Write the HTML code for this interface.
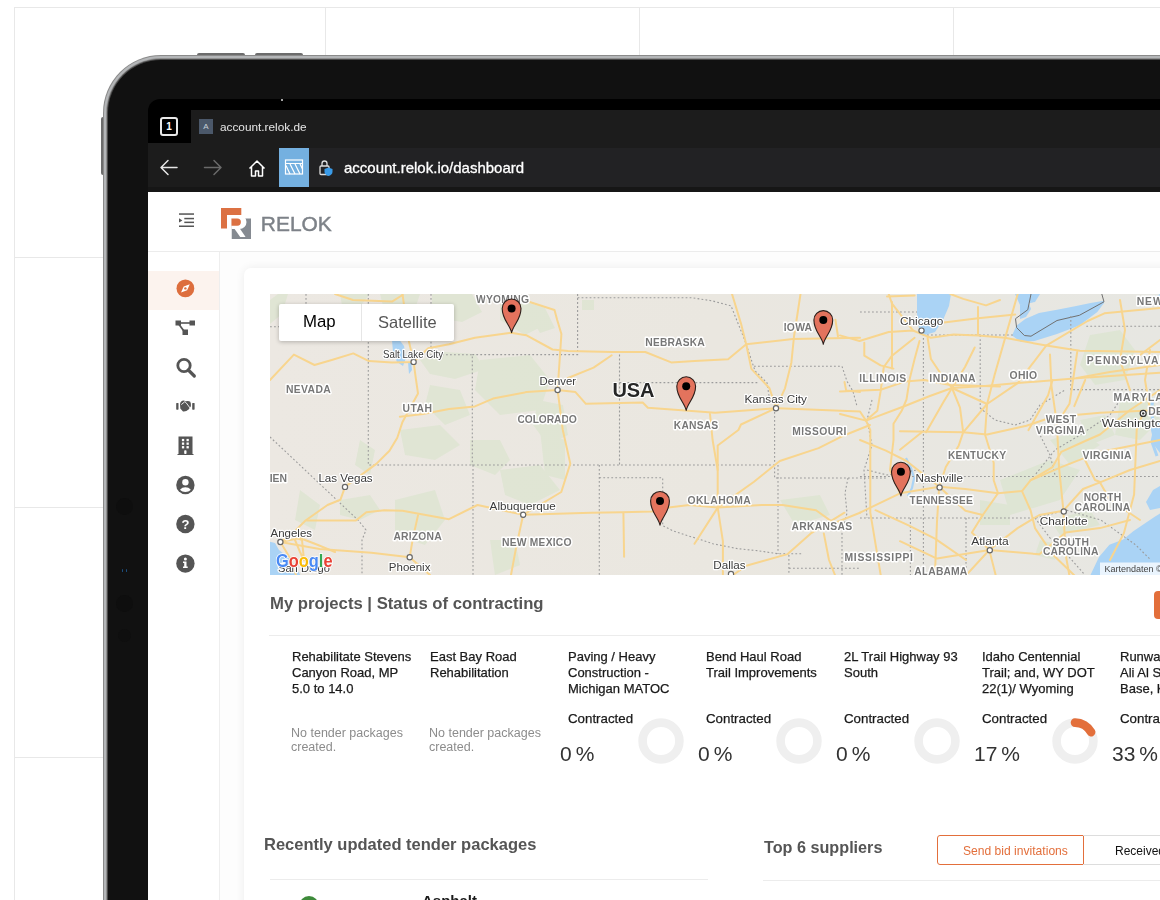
<!DOCTYPE html>
<html><head><meta charset="utf-8">
<style>
*{margin:0;padding:0;box-sizing:border-box}
html,body{width:1160px;height:900px;overflow:hidden;background:#fff;font-family:"Liberation Sans",sans-serif}
div.tx,div.pt,div.nt,div.ct,div.pc,svg{will-change:transform}
div,svg{position:absolute}
.gv{top:7px;width:1px;height:893px;background:#e8e8e8}
.gh{left:14px;height:1px;width:1146px;background:#e8e8e8}
.tx{white-space:nowrap}
.pt{font-size:13px;line-height:16px;color:#1a1a1a;width:130px;-webkit-text-stroke:0.25px #1a1a1a}
.nt{font-size:12.5px;line-height:14px;color:#8c8c8c;width:130px}
.ct{font-size:13.3px;line-height:16px;color:#1a1a1a;-webkit-text-stroke:0.25px #1a1a1a}
.pc{font-size:21px;line-height:24px;color:#333}
</style></head><body>
<!-- grid -->
<div class="gh" style="top:7px"></div>
<div class="gh" style="top:257px"></div>
<div class="gh" style="top:507px"></div>
<div class="gh" style="top:757px"></div>
<div class="gv" style="left:14px"></div>
<div class="gv" style="left:325px"></div>
<div class="gv" style="left:639px"></div>
<div class="gv" style="left:953px"></div>

<!-- frame buttons -->
<div style="left:197px;top:53px;width:48px;height:5px;border-radius:2px;background:#6c6c6c"></div>
<div style="left:255px;top:53px;width:48px;height:5px;border-radius:2px;background:#6c6c6c"></div>
<div style="left:101px;top:117px;width:5px;height:58px;border-radius:2px;background:#6c6c6c"></div>

<div style="left:103px;top:55px;width:1200px;height:1000px;border-radius:58px 0 0 0;background:#8a8a8a"></div>
<div style="left:104px;top:56px;width:1200px;height:1000px;border-radius:57px 0 0 0;background:#b4b6b8"></div>
<div style="left:105.5px;top:57.5px;width:1200px;height:1000px;border-radius:55.5px 0 0 0;background:#909090"></div>
<div style="left:107px;top:59px;width:1200px;height:1000px;border-radius:54px 0 0 0;background:#4a4a4a"></div>
<div style="left:108px;top:60px;width:1200px;height:1000px;border-radius:53px 0 0 0;background:#111"></div>

<div style="left:116px;top:498px;width:17px;height:17px;border-radius:50%;background:#0e0e0e"></div>
<div style="left:121.5px;top:569px;width:1.5px;height:2.5px;border-radius:1px;background:#1d4f80"></div>
<div style="left:125.5px;top:569px;width:1.5px;height:2.5px;border-radius:1px;background:#1d4f80"></div>
<div style="left:116px;top:595px;width:17px;height:17px;border-radius:50%;background:#0e0e0e"></div>
<div style="left:118px;top:629px;width:13px;height:13px;border-radius:50%;background:#0f0f0f"></div>
<!-- screen -->
<div style="left:148px;top:99px;width:1100px;height:900px;border-radius:12px 0 0 0;background:#000"></div>
<div style="left:281px;top:99px;width:2px;height:2px;background:#ddd;border-radius:1px"></div>
<!-- tab bar -->
<div style="left:191px;top:110px;width:1000px;height:38px;background:#1c1c1c"></div>
<div style="left:148px;top:143px;width:43px;height:5px;background:#1c1c1c"></div>
<div style="left:160px;top:117px;width:18px;height:19px;border:2px solid #e8e8e8;border-radius:3px;color:#fff;font-size:10px;font-weight:bold;line-height:15px;text-align:center">1</div>
<div style="left:199px;top:119px;width:14px;height:15px;background:#4b586a;color:#c8d0da;font-size:8px;line-height:15px;text-align:center">A</div>
<div class="tx" style="left:220px;top:119px;font-size:11.8px;line-height:16px;color:#e6e6e6">account.relok.de</div>
<!-- address bar -->
<div style="left:148px;top:148px;width:1100px;height:39px;background:#1c1c1c"></div>
<div style="left:308px;top:148px;width:1000px;height:39px;background:#222224"></div>
<div style="left:279px;top:148px;width:30px;height:39px;background:#74b0e0"></div>
<svg style="left:148px;top:148px" width="200" height="40" viewBox="148 148 200 40">
  <g fill="none" stroke="#e6e6e6" stroke-width="1.5" stroke-linecap="round" stroke-linejoin="round">
    <path d="M177 167.5H161M168 160.5l-7 7 7 7"/>
  </g>
  <g fill="none" stroke="#6a6a6a" stroke-width="1.5" stroke-linecap="round" stroke-linejoin="round">
    <path d="M204.5 167.5H221M214 160.5l7 7-7 7"/>
  </g>
  <g fill="none" stroke="#fff" stroke-width="1.5" stroke-linejoin="round">
    <path d="M249.5 168.5L257 161l7.5 7.5M251.5 166.5V176h4v-5h3v5h4v-9.5"/>
  </g>
  <g fill="none" stroke="#fff" stroke-width="1.2">
    <rect x="285.5" y="160" width="17" height="14"/>
    <path d="M285.5 163.5h17M286 165.5l4 8.5M290 164l5 10M295 164l5 10M300 164l2.5 5"/>
  </g>
  <g fill="none" stroke="#ddd" stroke-width="1.3">
    <rect x="320" y="166" width="9" height="8.5" rx="1"/>
    <path d="M322 166v-2.5a2.5 2.5 0 0 1 5 0V166"/>
  </g>
  <path d="M328.5 167.5l4 1.5v3c0 2-2 3.5-4 4-2-.5-4-2-4-4v-3z" fill="#3a9be8"/>
</svg>
<div class="tx" style="left:344px;top:157px;font-size:15px;line-height:22px;color:#fff;-webkit-text-stroke:0.3px #fff">account.relok.io/dashboard</div>
<div style="left:148px;top:187px;width:1100px;height:5px;background:#161616"></div>

<!-- app -->
<div id="app" style="left:148px;top:192px;width:1100px;height:720px;background:#fff"></div>
<div style="left:148px;top:251px;width:1100px;height:1px;background:#ececec"></div>
<div style="left:219px;top:252px;width:1px;height:700px;background:#eeeeee"></div>
<div style="left:148px;top:271px;width:71px;height:39px;background:#fcf3ee"></div>
<div style="left:220px;top:252px;width:1000px;height:700px;background:#fdfdfd"></div>

<!-- header icon + logo -->
<svg style="left:170px;top:200px" width="180" height="50" viewBox="170 200 180 50">
  <g fill="#555">
    <rect x="179" y="213.3" width="15" height="1.5"/>
    <rect x="184.3" y="217.8" width="9.7" height="1.5"/>
    <rect x="184.3" y="221.6" width="9.7" height="1.5"/>
    <rect x="179" y="225.5" width="15" height="1.5"/>
    <path d="M179 218.3l3.4 2.1-3.4 2.1z"/>
  </g>
  <g>
    <rect x="221" y="208" width="20.3" height="7" fill="#dc7143"/>
    <rect x="221" y="208" width="6" height="20.5" fill="#dc7143"/>
    <rect x="231.5" y="218.5" width="19.5" height="20.5" fill="#858a91"/>
    <path d="M231.5 215H239.5A7 7 0 0 1 239.5 229H231.5Z" fill="#fff"/>
    <path d="M227 215h4.5v24h-4.5z" fill="#fff"/>
    <path d="M231.5 218.5H237.3A3.6 3.6 0 0 1 237.3 225.7H231.5Z" fill="#dc7143"/>
    <path d="M234.3 228.5h5.5l5.8 8.5h-5.4z" fill="#fff"/>
  </g>
  <text x="260.8" y="231" font-family="Liberation Sans" font-size="21" fill="#7d8288" stroke="#7d8288" stroke-width="0.45" textLength="71" lengthAdjust="spacingAndGlyphs">RELOK</text>
</svg>

<!-- sidebar icons -->
<svg style="left:160px;top:270px" width="50" height="310" viewBox="160 270 50 310">
  <circle cx="185.4" cy="288.4" r="8.9" fill="#dd6e3d"/>
  <path d="M181 292.6L183.7 286.6 189.8 284.2 187.1 290.2z" fill="#fff"/>
  <circle cx="185.4" cy="288.4" r="1.2" fill="#dd6e3d"/>
  <g fill="#555">
    <rect x="175.5" y="320.5" width="5.5" height="5"/>
    <rect x="189.5" y="320.5" width="5.5" height="5"/>
    <rect x="182.5" y="329.5" width="5.5" height="5.5"/>
    <rect x="180" y="322.2" width="10" height="1.6"/>
    <path d="M178 324.5l1.4-.9 5.2 7-1.4.9z"/>
  </g>
  <circle cx="184" cy="365.5" r="6.2" fill="none" stroke="#555" stroke-width="2.8"/>
  <path d="M188.3 370l6 6" stroke="#555" stroke-width="3.2" stroke-linecap="round"/>
  <g fill="#555">
    <rect x="176.2" y="402.9" width="2.3" height="6.8" rx="0.6"/>
    <rect x="192.2" y="402.9" width="2.4" height="6.8" rx="0.6"/>
    <path d="M180 404Q180.5 400.6 183.8 400.5L185.8 401.3Q188.5 400.3 190.3 401.8Q191.2 403.5 190.9 406.2L188.6 409.6Q186 411.8 183 411.4L180.3 408.6Z"/>
  </g>
  <path d="M181.3 404.6L184.8 401.7 186 402.6 190.3 408.3" stroke="#fff" stroke-width="0.9" fill="none"/>
  <g fill="#555">
    <path d="M178.5 436.5h14v17.5h1v1h-16v-1h1z"/>
  </g>
  <g fill="#fff">
    <rect x="181.9" y="438.9" width="2.3" height="2.3"/><rect x="186.5" y="438.9" width="2.3" height="2.3"/>
    <rect x="181.9" y="442.5" width="2.3" height="2.3"/><rect x="186.5" y="442.5" width="2.3" height="2.3"/>
    <rect x="181.9" y="446.1" width="2.3" height="2.3"/><rect x="186.5" y="446.1" width="2.3" height="2.3"/>
    <rect x="184.2" y="450.3" width="2.3" height="3.8" rx="0.8"/>
  </g>
  <circle cx="185.4" cy="485" r="9.2" fill="#555"/>
  <circle cx="185.4" cy="482.3" r="3.2" fill="#fff"/>
  <path d="M180 489.8c1.4-1.9 3.2-2.6 5.4-2.6s4 .7 5.4 2.6c-1.5 1.4-3.3 2.2-5.4 2.2s-3.9-.8-5.4-2.2z" fill="#fff"/>
  <circle cx="185.4" cy="524" r="9.2" fill="#555"/>
  <text x="185.4" y="529" text-anchor="middle" font-family="Liberation Sans" font-weight="bold" font-size="13" fill="#fff">?</text>
  <circle cx="185.4" cy="563.6" r="9.2" fill="#555"/>
  <circle cx="185.4" cy="559" r="1.5" fill="#fff"/>
  <path d="M183 561.5h3.5v5h1.2v1.5h-4.7v-1.5h1.2v-3.5h-1.2z" fill="#fff"/>
</svg>

<!-- card -->
<div style="left:244px;top:268px;width:1000px;height:700px;border-radius:7px;background:#fff;box-shadow:0 0 10px rgba(0,0,0,0.07)"></div>

<!-- MAP -->
<div id="map" style="left:270px;top:294px;width:890px;height:281px;background:#ebe7e1;overflow:hidden">
<svg style="left:0;top:0" width="890" height="281" viewBox="270 294 890 281">
<defs>
<linearGradient id="bg" x1="0" x2="1" y1="0" y2="0"><stop offset="0" stop-color="#ece8e2"/><stop offset="0.5" stop-color="#eae7e0"/><stop offset="1" stop-color="#e7e7e2"/></linearGradient>
</defs>
<rect x="270" y="294" width="890" height="281" fill="url(#bg)"/>
<!-- green patches -->
<g fill="#d9e4cc" opacity="0.6">
<path d="M270 300l8 -6h10l-6 20-12 10z"/>
<path d="M340 294h30l-8 10-20 2z"/>
<path d="M380 294h40l-5 15-30 5z"/>
<path d="M432 294h40l10 18-20 10-30-5z"/>
<path d="M500 300l30 5 15 20-20 10-25-15z"/>
<path d="M420 360l25-8 30 2 10 15-30 10-25-5z"/>
<path d="M430 385l30 5 10 25-25 10-20-20z"/>
<path d="M480 360l50 -5 20 25-10 30-40 5-25-25z"/>
<path d="M520 300l25 8 10 20-15 5z"/>
<path d="M538 400l25 5 5 30-20 10-15-20z"/>
<path d="M400 430l40-5 20 20-25 15-30-5z"/>
<path d="M470 440l30 0 10 20-15 15-25-10z"/>
<path d="M360 440l15 10-5 25-15-10z"/>
<path d="M340 500l30-5 10 15-20 10-20-5z"/>
<path d="M395 500l40-10 10 30-20 25-30-10z"/>
<path d="M500 470l40-5 20 25-30 15-25-10z"/>
<path d="M540 430l25 10v40l-20-5z"/>
<path d="M490 540l25 0 5 25-25 10z"/>
<path d="M300 490l20 15-5 25-20-10z"/>
<path d="M582 300l12 0 0 10-12 0z"/>
<path d="M1090 335l30 -5 15 20-10 30-30 5-15-20z"/>
<path d="M1120 400l30 -10 10 30-20 20-25-5z"/>
<path d="M1000 480l50-20 30 10-20 30-50 15z"/>
<path d="M1050 440l30-10 20 15-30 20z"/>
<path d="M780 500l40-5 10 20-35 10z"/>
<path d="M1080 420l25 -5 10 20-25 10z"/>
<path d="M980 500l30 5 0 20-30 0z"/>
<path d="M1040 540l20 5-5 15-20-5z"/>
<path d="M1050 520l40 -10 10 15-40 10z"/>
</g>
<!-- water -->
<g fill="#aad3f5">
<path d="M392 340l6-2 6 8 2 12-3 8-6-4-4-10z"/>
<path d="M408 362l3 0 1 8-3 4z"/>
<path d="M917 294h34l-2 12-6 14-8 12-10 3-6-6-2-15z"/>
<path d="M1015 294h25l-5 8-15 3z"/>
<path d="M1012 335.5L1016.6 325.4 1025.6 318.7 1039 313 1057 309.7 1075 306.3 1090.6 303 1104 300.7 1104 303 1097.3 312 1079.4 325.4 1057 334 1034.5 341 1021 342Z"/><path d="M1020 305l8-4 3 8-5 8-6 2z"/>
<path d="M270 541.7L275 543 279 550 285 555 291 560 300.4 575H270Z"/>
<path d="M1090 576L1099 557 1109.4 544.8 1123.2 539.6 1133.6 531 1144 524 1154.4 517 1160 513.6V576Z"/><path d="M1146 502L1153 490 1160 486V508L1150 510Z"/>
<path d="M1150 425l6-5 4 3v30l-6-8z"/>
<path d="M1150 300l10-6v10z"/>
</g>
<path d="M906 458L911 468 914 478 912 488 908 496" fill="none" stroke="#aad3f5" stroke-width="2.2"/>
<path d="M1153 398L1151 412 1155 428 1152 442 1157 456" fill="none" stroke="#aad3f5" stroke-width="3"/>
<!-- intl border -->
<path d="M1031 294L1027.8 309.7 1015.5 318.7 1016.6 327.6 1024.4 335.5 1031 336.2 1057 320.5 1079.4 315.3 1104 301.8 1101.8 294" fill="none" stroke="#707070" stroke-width="1"/>
<!-- state borders -->
<g fill="none" stroke="#9c9c9c" stroke-width="1.1" stroke-dasharray="1.8 2.2">
<path d="M306 294v32"/>
<path d="M270 326.7h161v28h41.3v110.3"/>
<path d="M368.3 294v171h104.7"/>
<path d="M431 294v32.7"/>
<path d="M472.3 354.6h105.3V294"/>
<path d="M577.6 297.8h114.4l20 3 19 5 6 15 8 20 10 30 12 12 3 20"/>
<path d="M619.5 354.6v110.4"/>
<path d="M619.5 382.6h139.5"/>
<path d="M473 465v110"/>
<path d="M473 465h301.6v13h113"/>
<path d="M599.3 465v110"/>
<path d="M599.3 477.8h63.4v47.9l10 5 15 5 10 3 15 5 25 5 20 2 20 3 25 0"/>
<path d="M778 465v89"/>
<path d="M788.9 555v20"/>
<path d="M789 568.3h71"/>
<path d="M754 366.3h88l5 15 6 10 4 15"/>
<path d="M270 437l88 83 8 10-4 10v35"/>
<path d="M774.6 400v65"/>
<path d="M848 478l-3 15 2 20-5 20v42"/>
<path d="M860 312h57"/>
<path d="M923.4 334v241"/>
<path d="M923 335h92"/>
<path d="M980.2 335.3v72.4"/>
<path d="M1070.8 316v73.6h89.2"/>
<path d="M1086.3 326.2h73.7"/>
<path d="M860 476.5h300"/>
<path d="M860 518h175.8"/>
<path d="M966 518v57"/>
<path d="M910.4 518v57"/>
<path d="M872 400l-5 20 5 25-8 25 3 48"/>
<path d="M980 408l15 12 20 5 15-5 10-15 25-15"/>
<path d="M1035 425l15 30 5 20"/>
<path d="M1120 400l-10 15-30 20-25 15-20 25"/>
<path d="M1035.8 518l30-8 35 10 35 25 15 15"/>
<path d="M1035 518l15 20 20 20 15 17"/>
<path d="M867 470l20 5 30 -5"/>
</g>

<g fill="none" stroke="#f8d58e" stroke-width="2" stroke-linejoin="round" stroke-linecap="round">
<!-- west -->
<path d="M270 380L293.9 354.6 314.5 365 332.6 359.8 353.3 353.4 368.9 361.1 392 362.4 413.6 361.9 428.3 348.2 449 344.3 474.9 337.8 511 332.7 526.6 335.3 552.5 349.5 568 351 611.7 352 645.3 352 671.2 362.4 694.5 361.1 728.1 359.3 746.2 344.3 792.7 339.1 860 337.8"/>
<path d="M402.5 294L409 341.7 413.6 361.9 415.4 375.3 418 393.4 402.5 421.9 397.3 437.8 389.5 450.7 376.6 463.6 345 486.9 340.4 499.8 327.5 505 305.5 520.5 293.9 532.1 280.4 542"/>
<path d="M399.9 416.7L423.2 414.1 449 409 474.9 406.4 493 398.6 526.6 392.1 557.6 390 575.5 392.1 585.9 403.8 642.7 402.5 647.9 407.7 715.2 412.8 776 408.2 860 411.5 866 420.6"/>
<path d="M560.2 352L557.6 390 562.8 430 570.3 463.6 561.3 492 523.2 514.8 516.3 546.4 511 575"/>
<path d="M306.8 520.5L355.9 520.5 366.3 512.2 384.4 510.2 402.5 510.7 449 519.2 477.5 505 523.2 514.8 591 512.7 622.1 512.2 651.8 511.5 668.6 507.6 689.3 505 717.7 507.6 761.7 505 782.4 505 816 510.2 834 523.1 860 512.7"/>
<path d="M280.4 542L319.7 549 371.4 552.8 409.7 557.2 412.8 538.6 418 515.3"/>
<path d="M409.7 557.2L430 575"/>
<path d="M280.4 542L290 558 296 575"/>
<path d="M295 540L300 552 304 560 302 540 297 538"/>
<path d="M280.4 542L300 538 318 545 335 552"/>
<path d="M529.7 302L554.5 310 557.2 320 561.4 334 560.2 352"/>
<path d="M568 378L593.6 367.6 611.7 355.2"/>
<path d="M335 294L353 300 392 301.6 402.5 295"/>

<!-- central -->
<path d="M800.5 294L794 336.5 791.4 362.4 785 388.3 776 408.2 741 424.5 738.4 430 717.7 445.5 717.7 507.6 722.9 541.2 722.9 575"/>
<path d="M776 408.2L769.5 388.3 751.4 368.9 746.2 344.3 741 323.6 732 294"/>
<path d="M710 414L712.6 440 717.7 470"/>
<path d="M717.7 507.6L754 481.7 779.8 461 818.6 448.1 844.5 435.2 870 425"/>
<path d="M623.4 512.7L624.1 556.7"/>
<path d="M717.7 507.6L694.5 543.8"/>
<path d="M746.2 565.8L787.6 554.1 810.8 533.4 844.5 512.7"/>
<path d="M823.8 533.4L829 560 835 575"/>
<path d="M835.4 319.7L838 336.5"/>
<path d="M844.5 382L846.2 390.6 860 392"/>
<path d="M733 575L746 566"/>
<!-- east -->
<path d="M840 335.4L859.5 341 888.7 332 913 330.5 921 333.8 930.9 337.8 953.6 334.6 978 335.4 1004.8 337.8 1046.2 345.6 1079.8 350.8 1160 352"/>
<path d="M913 330.5L892 303.7 888.7 294"/>
<path d="M887 296.4L914.6 295.6"/>
<path d="M950.3 294L963.3 298.9 986 305.4 1000 300"/>
<path d="M943.9 322.4L978 318.3 1015.2 314.6"/>
<path d="M978 307L978 334.6"/>
<path d="M919.5 341L914.6 359 909.8 378.4 906.5 399.5 901.7 410.8 893.5 423.8 893.5 440 890 470 900 493.3"/>
<path d="M914.6 337.8L892 355.7 883.8 367 880.6 391.4 877.3 410.8 866 420.6 840 414"/>
<path d="M840 391.4L880.6 389.7 904.9 381.6 924.4 380 950.3 384.9 1000 386.5"/>
<path d="M927.6 337.8L930.9 359 940.6 373.5 952 388 960 407.6 963.2 432.3 958.8 445.4 945.8 467 939.2 486.8 937 521.6 934.9 576"/>
<path d="M866 420.6L904.9 406 929.2 396.2 952 388 985 386 1017.7 383.1 1079.8 377.9 1160 372.8"/>
<path d="M974.7 347.5L965 367 952 388 943.6 401.8 926.1 432.3"/>
<path d="M952 388L987.1 404"/>
<path d="M963.2 432.3L987.1 404 1017.7 383.1 1046.2 345.6"/>
<path d="M864.3 342.7L864.3 355.7 880.6 365.4 893.5 368.6"/>
<path d="M892 302L892 368.6"/>
<path d="M1017.7 294L1004.8 339.1 994.5 375.3 987.1 404 985 434.5 993.7 462.8 993.7 480.2 998 493.3 982.8 515 971.9 532.5 989.3 550 995.9 576"/>
<path d="M900 431.2L963.2 432.3 987.1 434.5 1026.4 425.8 1052.5 417 1100 412.7 1160 410"/>
<path d="M1050 354.6L1051.4 385.7 1056.9 423.6 1059 467.1 1063.4 510.7 1065.6 554.3 1069.5 576"/>
<path d="M1077.2 352L1069.5 403.8 1056.9 423.6"/>
<path d="M1030.7 480.2L1052.5 467.1 1061.2 451.9 1085.2 441 1100 434.5 1130 410 1160 390"/>
<path d="M860 512.7L900 493.3 939.2 486.8 965.4 489 998 493.3 1022 491.1 1030.7 480.2 1061.2 467.1 1100 451.9 1160 440"/>
<path d="M1022 491.1L1030.7 510.7 1035 528.1 1052.5 554.3 1075 576"/>
<path d="M965.4 576L989.3 550 1017.6 528.1 1039.4 515 1063.4 510.7 1083 489 1100 482.4 1130 470 1160 461"/>
<path d="M900 541.2L937 558.6 989.3 550 1039.4 554.3 1065.6 532.5 1100 528.1 1130 520"/>
<path d="M939.2 486.8L965.4 510.7 982.8 515"/>
<path d="M921.8 432.3L900 449.7"/>
<path d="M1028.5 430.1L1048.1 395.3 1052.5 380"/>
<path d="M1074.3 406.1L1085.2 380"/>
<path d="M1143 413L1136.7 430 1134.1 494.6 1123.8 533.4 1110 560"/>
<path d="M1077 378L1110 372 1160 365"/>
<path d="M1046.2 345.6L1087.6 321 1104.4 313.3 1160 308.1"/>
<path d="M1120 300L1125 330 1120 360 1130 390"/>
<path d="M1110 360L1140 355 1160 340"/>
<path d="M1150 350L1145 380 1150 410"/>
<path d="M866 420.6L870.3 430 870.3 512.7 880.7 575"/>
<path d="M875.5 510.2L909.1 525.7 935 538.6 966 560"/>
<path d="M860 440L885.9 450.7 906.5 461 939.2 486.8"/>
<path d="M1100 482.4L1110 500 1140 520"/>
<path d="M1085 460L1095 480 1100 482"/>
</g>
<!-- city dots -->
<g fill="#fff" stroke="#666" stroke-width="1.2">
<circle cx="413.6" cy="361.9" r="2.6"/><circle cx="557.6" cy="390" r="2.6"/><circle cx="345" cy="486.9" r="2.6"/>
<circle cx="280.4" cy="542" r="2.6"/><circle cx="409.7" cy="557.2" r="2.6"/><circle cx="523.2" cy="514.8" r="2.6"/>
<circle cx="776" cy="408.2" r="2.6"/><circle cx="921.5" cy="330.6" r="2.6"/><circle cx="939.6" cy="487.4" r="2.6"/>
<circle cx="1063.8" cy="511.5" r="2.6"/><circle cx="989.8" cy="550.2" r="2.6"/><circle cx="731" cy="574" r="2.6"/>
</g>
<circle cx="1143.2" cy="413.4" r="3" fill="#fff" stroke="#333" stroke-width="1.2"/><circle cx="1143.2" cy="413.4" r="1.2" fill="#333"/>
<g font-family="Liberation Sans" font-weight="bold" font-size="10.4" fill="#777" stroke="#fff" stroke-width="2.8" paint-order="stroke" stroke-linejoin="round">
<text x="476" y="302.9" textLength="53.0" lengthAdjust="spacing">WYOMING</text>
<text x="286" y="393.1" textLength="44.8" lengthAdjust="spacing">NEVADA</text>
<text x="402.5" y="412.3" textLength="29.5" lengthAdjust="spacing">UTAH</text>
<text x="517.5" y="422.8" textLength="59.3" lengthAdjust="spacing">COLORADO</text>
<text x="645.3" y="345.5" textLength="59.5" lengthAdjust="spacing">NEBRASKA</text>
<text x="673.8" y="428.8" textLength="44.5" lengthAdjust="spacing">KANSAS</text>
<text x="783.7" y="331.3" textLength="28.4" lengthAdjust="spacing">IOWA</text>
<text x="792.2" y="434.7" textLength="54.3" lengthAdjust="spacing">MISSOURI</text>
<text x="687.5" y="503.6" textLength="63.3" lengthAdjust="spacing">OKLAHOMA</text>
<text x="791.4" y="530.0" textLength="60.8" lengthAdjust="spacing">ARKANSAS</text>
<text x="393.4" y="540.3" textLength="48.4" lengthAdjust="spacing">ARIZONA</text>
<text x="502" y="545.5" textLength="69.6" lengthAdjust="spacing">NEW MEXICO</text>
<text x="859.2" y="382.0" textLength="47.0" lengthAdjust="spacing">ILLINOIS</text>
<text x="929.3" y="382.3" textLength="46.3" lengthAdjust="spacing">INDIANA</text>
<text x="1009.5" y="379.1" textLength="27.6" lengthAdjust="spacing">OHIO</text>
<text x="1086.8" y="363.6" textLength="93.2" lengthAdjust="spacing">PENNSYLVANIA</text>
<text x="1113.4" y="400.8" textLength="66.6" lengthAdjust="spacing">MARYLAND</text>
<text x="1045.7" y="422.8" textLength="30.3" lengthAdjust="spacing">WEST</text>
<text x="1035.8" y="433.9" textLength="49.2" lengthAdjust="spacing">VIRGINIA</text>
<text x="1136.7" y="305.2" textLength="63.3" lengthAdjust="spacing">NEW YORK</text>
<text x="1148.3" y="414.5" textLength="14.7" lengthAdjust="spacing">DE</text>
<text x="947.9" y="459.4" textLength="58.2" lengthAdjust="spacing">KENTUCKY</text>
<text x="1082.4" y="459.4" textLength="49.1" lengthAdjust="spacing">VIRGINIA</text>
<text x="909.6" y="503.6" textLength="63.4" lengthAdjust="spacing">TENNESSEE</text>
<text x="1083.7" y="501.0" textLength="37.5" lengthAdjust="spacing">NORTH</text>
<text x="1074.6" y="511.3" textLength="55.6" lengthAdjust="spacing">CAROLINA</text>
<text x="1052.7" y="545.5" textLength="36.2" lengthAdjust="spacing">SOUTH</text>
<text x="1043" y="555.1" textLength="55.4" lengthAdjust="spacing">CAROLINA</text>
<text x="844.5" y="561.0" textLength="68.5" lengthAdjust="spacing">MISSISSIPPI</text>
<text x="914.3" y="575.3" textLength="53.0" lengthAdjust="spacing">ALABAMA</text>
<text x="287" y="482" text-anchor="end">RNIEN</text>
</g>
<text x="612.5" y="396.8" textLength="41.9" lengthAdjust="spacing" font-family="Liberation Sans" font-weight="bold" font-size="20" fill="#262626" stroke="#fff" stroke-width="2.2" paint-order="stroke" stroke-linejoin="round">USA</text>
<g font-family="Liberation Sans" font-size="11.5" fill="#3a3a3a" stroke="#fff" stroke-width="2.4" paint-order="stroke" stroke-linejoin="round">
<text x="383" y="357.6" textLength="60.0" lengthAdjust="spacingAndGlyphs">Salt Lake City</text>
<text x="539.5" y="384.7" textLength="36.5" lengthAdjust="spacingAndGlyphs">Denver</text>
<text x="318.4" y="481.5" textLength="54.3" lengthAdjust="spacingAndGlyphs">Las Vegas</text>
<text x="270.6" y="536.9" textLength="41.4" lengthAdjust="spacingAndGlyphs">Angeles</text>
<text x="388.8" y="571.2" textLength="41.6" lengthAdjust="spacingAndGlyphs">Phoenix</text>
<text x="489.6" y="510.0" textLength="66.2" lengthAdjust="spacingAndGlyphs">Albuquerque</text>
<text x="744.4" y="402.8" textLength="62.6" lengthAdjust="spacingAndGlyphs">Kansas City</text>
<text x="713.3" y="569.2" textLength="32.4" lengthAdjust="spacingAndGlyphs">Dallas</text>
<text x="900" y="325.2" textLength="43.3" lengthAdjust="spacingAndGlyphs">Chicago</text>
<text x="1101.8" y="427.4" textLength="67.2" lengthAdjust="spacingAndGlyphs">Washington</text>
<text x="915.6" y="482.0" textLength="47.3" lengthAdjust="spacingAndGlyphs">Nashville</text>
<text x="1039.7" y="525.2" textLength="47.9" lengthAdjust="spacingAndGlyphs">Charlotte</text>
<text x="971.2" y="544.9" textLength="37.5" lengthAdjust="spacingAndGlyphs">Atlanta</text>
<text x="278" y="572.2" textLength="52.0" lengthAdjust="spacingAndGlyphs">San Diego</text>
</g>
<g transform="translate(511.6,332.7)"><path d="M0 0C-1.5-8-9.4-13-9.4-24.3A9.4 9.4 0 1 1 9.4-24.3C9.4-13 1.5-8 0 0Z" fill="#e3735d" stroke="#2b1f1b" stroke-width="1.1" stroke-linejoin="round"/><circle cy="-24.3" r="4" fill="#000"/></g>
<g transform="translate(686.2,410.5)"><path d="M0 0C-1.5-8-9.4-13-9.4-24.3A9.4 9.4 0 1 1 9.4-24.3C9.4-13 1.5-8 0 0Z" fill="#e3735d" stroke="#2b1f1b" stroke-width="1.1" stroke-linejoin="round"/><circle cy="-24.3" r="4" fill="#000"/></g>
<g transform="translate(823.3,344.3)"><path d="M0 0C-1.5-8-9.4-13-9.4-24.3A9.4 9.4 0 1 1 9.4-24.3C9.4-13 1.5-8 0 0Z" fill="#e3735d" stroke="#2b1f1b" stroke-width="1.1" stroke-linejoin="round"/><circle cy="-24.3" r="4" fill="#000"/></g>
<g transform="translate(660,525.2)"><path d="M0 0C-1.5-8-9.4-13-9.4-24.3A9.4 9.4 0 1 1 9.4-24.3C9.4-13 1.5-8 0 0Z" fill="#e3735d" stroke="#2b1f1b" stroke-width="1.1" stroke-linejoin="round"/><circle cy="-24.3" r="4" fill="#000"/></g>
<g transform="translate(900.9,496)"><path d="M0 0C-1.5-8-9.4-13-9.4-24.3A9.4 9.4 0 1 1 9.4-24.3C9.4-13 1.5-8 0 0Z" fill="#e3735d" stroke="#2b1f1b" stroke-width="1.1" stroke-linejoin="round"/><circle cy="-24.3" r="4" fill="#000"/></g>
<g font-family="Liberation Sans" font-weight="bold" font-size="17.5" stroke="#fff" stroke-width="1.5" paint-order="stroke"><text x="276" y="567" textLength="56.5" lengthAdjust="spacingAndGlyphs"><tspan fill="#4a8af4">G</tspan><tspan fill="#e94235">o</tspan><tspan fill="#fabb05">o</tspan><tspan fill="#4a8af4">g</tspan><tspan fill="#34a853">l</tspan><tspan fill="#e94235">e</tspan></text></g>
<rect x="1100" y="562.5" width="60" height="12.5" fill="#fff" opacity="0.75"/>
<text x="1104.4" y="571.5" font-family="Liberation Sans" font-size="9" fill="#444">Kartendaten ©</text>
</svg>
<div style="left:9px;top:9.5px;width:175px;height:37.5px;background:#fff;border-radius:2px;box-shadow:0 1px 4px rgba(0,0,0,0.25)"></div>
<div style="left:90.5px;top:9.5px;width:1px;height:37.5px;background:#e6e6e6"></div>
<div class="tx" style="left:32.5px;top:17px;font-size:16.8px;line-height:22px;color:#000">Map</div>
<div class="tx" style="left:108.3px;top:17px;font-size:16.5px;line-height:22px;color:#565656">Satellite</div>
</div>

<!-- projects -->
<div class="tx" style="left:269.5px;top:593.3px;font-size:16.7px;line-height:22px;font-weight:bold;color:#555">My projects | Status of contracting</div>
<div style="left:1154px;top:591px;width:20px;height:28px;border-radius:4px;background:#e36f3b"></div>
<div style="left:269px;top:635px;width:900px;height:1px;background:#ececec"></div>

<div class="pt tx" style="left:291.9px;top:648.6px">Rehabilitate Stevens<br>Canyon Road, MP<br>5.0 to 14.0</div>
<div class="nt tx" style="left:291.4px;top:725.7px">No tender packages<br>created.</div>
<div class="pt tx" style="left:429.8px;top:648.6px">East Bay Road<br>Rehabilitation</div>
<div class="nt tx" style="left:429.3px;top:725.7px">No tender packages<br>created.</div>
<div class="pt tx" style="left:567.5px;top:648.6px">Paving / Heavy<br>Construction -<br>Michigan MATOC</div>
<div class="ct tx" style="left:567.5px;top:711.2px">Contracted</div>
<div class="pc tx" style="left:559.5px;top:741.9px">0<span style="margin-left:4px">%</span></div>
<svg style="left:635.5px;top:716px" width="50" height="50" viewBox="-25 -25 50 50"><circle r="18.4" fill="none" stroke="#efefef" stroke-width="8.6"/></svg>
<div class="pt tx" style="left:705.6px;top:648.6px">Bend Haul Road<br>Trail Improvements</div>
<div class="ct tx" style="left:705.6px;top:711.2px">Contracted</div>
<div class="pc tx" style="left:697.6px;top:741.9px">0<span style="margin-left:4px">%</span></div>
<svg style="left:773.6px;top:716px" width="50" height="50" viewBox="-25 -25 50 50"><circle r="18.4" fill="none" stroke="#efefef" stroke-width="8.6"/></svg>
<div class="pt tx" style="left:843.7px;top:648.6px">2L Trail Highway 93<br>South</div>
<div class="ct tx" style="left:843.7px;top:711.2px">Contracted</div>
<div class="pc tx" style="left:835.7px;top:741.9px">0<span style="margin-left:4px">%</span></div>
<svg style="left:911.7px;top:716px" width="50" height="50" viewBox="-25 -25 50 50"><circle r="18.4" fill="none" stroke="#efefef" stroke-width="8.6"/></svg>
<div class="pt tx" style="left:981.6px;top:648.6px">Idaho Centennial<br>Trail; and, WY DOT<br>22(1)/ Wyoming</div>
<div class="ct tx" style="left:981.6px;top:711.2px">Contracted</div>
<div class="pc tx" style="left:973.6px;top:741.9px">17<span style="margin-left:4px">%</span></div>
<svg style="left:1049.6px;top:716px" width="50" height="50" viewBox="-25 -25 50 50"><circle r="18.4" fill="none" stroke="#efefef" stroke-width="8.6"/><path d="M0 -18.4A18.4 18.4 0 0 1 16.12 -8.86" fill="none" stroke="#e36f3b" stroke-width="8.6" stroke-linecap="round"/></svg>
<div class="pt tx" style="left:1119.6px;top:648.6px">Runway Repairs<br>Ali Al Salem Air<br>Base, Kuwait</div>
<div class="ct tx" style="left:1119.6px;top:711.2px">Contracted</div>
<div class="pc tx" style="left:1111.6px;top:741.9px">33<span style="margin-left:4px">%</span></div>
<svg style="left:1187.6px;top:716px" width="50" height="50" viewBox="-25 -25 50 50"><circle r="18.4" fill="none" stroke="#efefef" stroke-width="8.6"/><path d="M0 -18.4A18.4 18.4 0 0 1 16.12 8.86" fill="none" stroke="#e36f3b" stroke-width="8.6" stroke-linecap="round"/></svg>

<!-- bottom -->
<div class="tx" style="left:264px;top:832.5px;font-size:16.5px;line-height:22px;font-weight:bold;color:#555">Recently updated tender packages</div>
<div style="left:270px;top:879px;width:438px;height:1px;background:#ececec"></div>
<div style="left:299px;top:896px;width:20px;height:20px;border-radius:50%;background:#3d8a3a"></div>
<div class="tx" style="left:422px;top:892.4px;font-size:15px;line-height:18px;font-weight:bold;color:#1a1a1a">Asphalt</div>
<div class="tx" style="left:763.5px;top:835.5px;font-size:16.2px;line-height:22px;font-weight:bold;color:#555">Top 6 suppliers</div>
<div style="left:937px;top:835px;width:147px;height:30px;border:1px solid #e36f3b;border-radius:3px 0 0 3px"></div>
<div class="tx" style="left:963px;top:843px;font-size:12.1px;line-height:16px;color:#e36f3b">Send bid invitations</div>
<div style="left:1083px;top:835px;width:100px;height:30px;border:1px solid #ddd;border-left:none"></div>
<div class="tx" style="left:1115px;top:843px;font-size:12px;line-height:16px;color:#111">Received</div>
<div style="left:763px;top:880px;width:400px;height:1px;background:#ececec"></div>
</body></html>
